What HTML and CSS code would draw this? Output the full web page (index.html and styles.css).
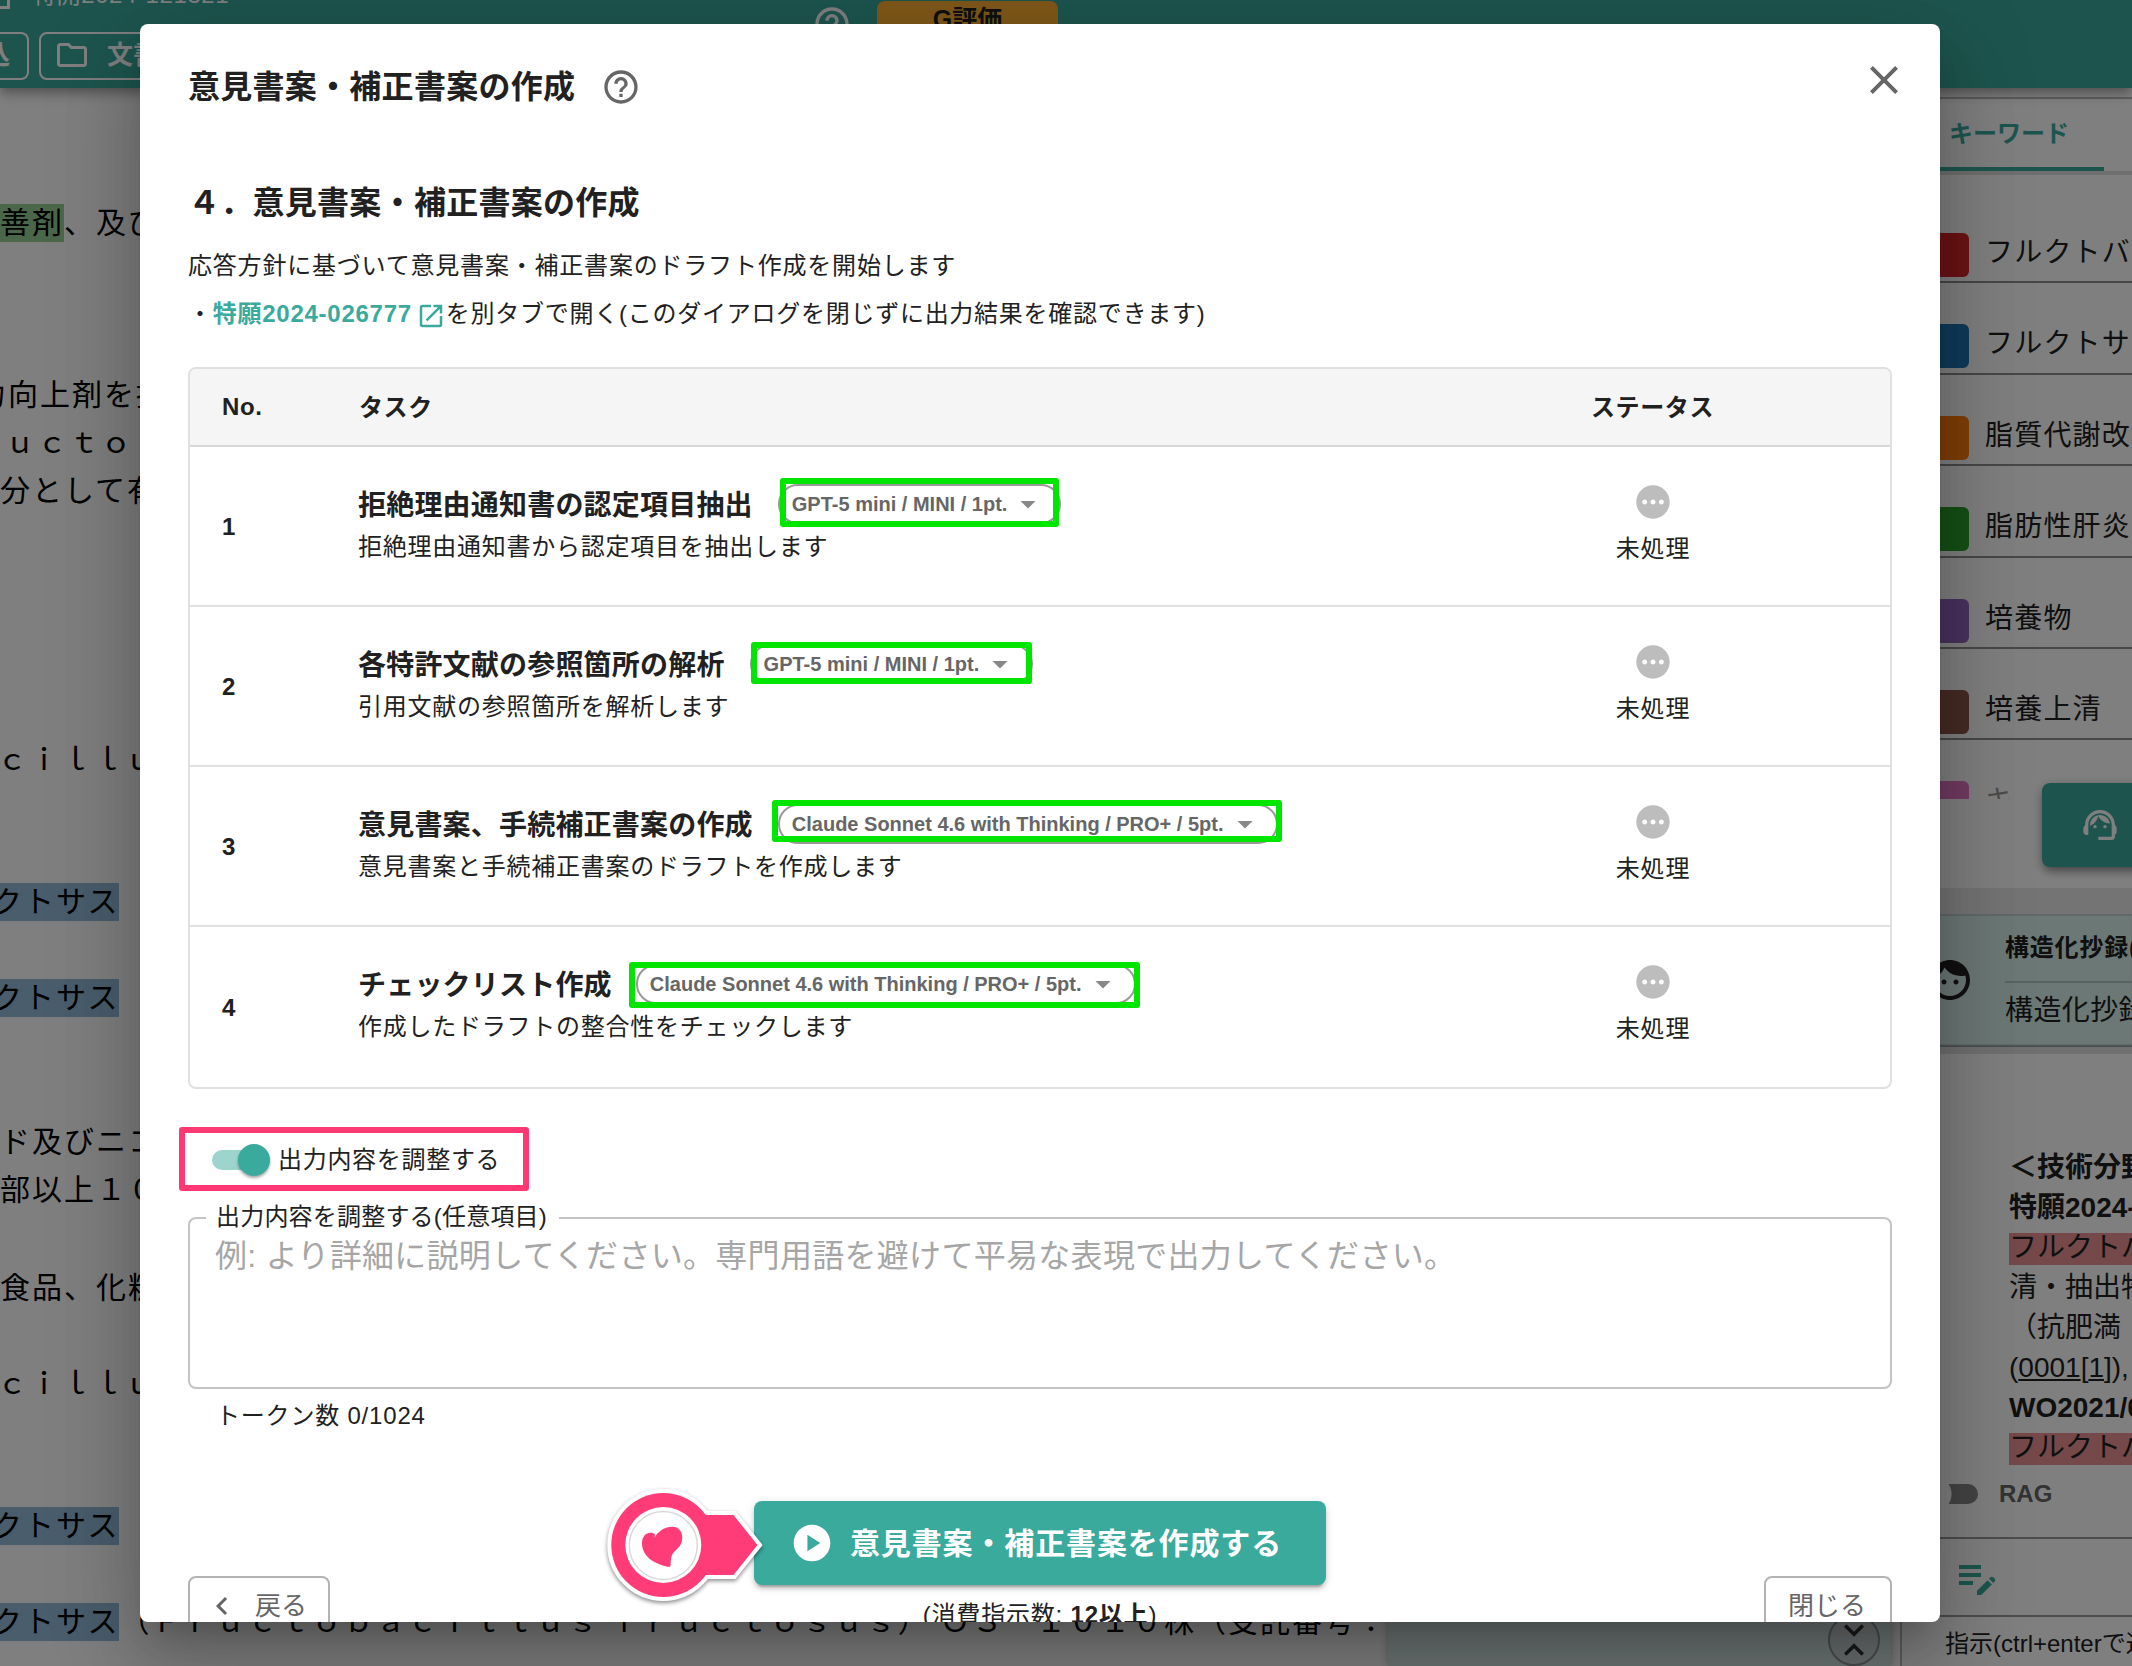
FILE: index.html
```html
<!DOCTYPE html>
<html lang="ja">
<head>
<meta charset="utf-8">
<title>意見書案・補正書案の作成</title>
<link rel="stylesheet" href="styles.css">
</head>
<body>
<div class="app">
  <header class="appbar">
    <div class="appbar-left">
      <div class="appbar-title"><span class="appbar-box"></span>特開2024-121321</div>
      <div class="appbar-buttons">
        <span class="outline-btn first">込</span>
        <span class="outline-btn folder">
          <svg width="36" height="36" viewBox="0 0 24 24"><path d="M9.17 6l2 2H20v10H4V6h5.17M10 4H4c-1.1 0-1.99.9-1.99 2L2 18c0 1.1.9 2 2 2h16c1.1 0 2-.9 2-2V8c0-1.1-.9-2-2-2h-8l-2-2z"/></svg>
          文書
        </span>
      </div>
    </div>
    <svg class="appbar-help" width="40" height="40" viewBox="0 0 24 24"><path d="M11 18h2v-2h-2v2zm1-16C6.48 2 2 6.48 2 12s4.48 10 10 10 10-4.480 10-10S17.520 2 12 2zm0 18c-4.410 0-8-3.590-8-8s3.590-8 8-8 8 3.590 8 8-3.590 8-8 8zm0-14c-2.210 0-4 1.790-4 4h2c0-1.100.900-2 2-2s2 .900 2 2c0 2-3 1.750-3 5h2c0-2.250 3-2.500 3-5 0-2.210-1.790-4-4-4z"/></svg>
    <span class="rating">G評価</span>
  </header>

  <div class="workspace">
    <main class="doc">
      <p class="l1"><mark class="green">善剤</mark>、及び</p>
      <p class="l2">力向上剤を提</p>
      <p class="l3">ｕｃｔｏ</p>
      <p>分として有</p>
      <p class="l5">ｃｉｌｌｕｓ</p>
      <p class="l6"><mark>クトサス</mark></p>
      <p class="l7"><mark>クトサス</mark></p>
      <p class="l8">ド及びニコ</p>
      <p>部以上１０</p>
      <p class="l10">食品、化粧</p>
      <p class="l5b">ｃｉｌｌｕｓ</p>
      <p class="l12"><mark>クトサス</mark></p>
      <p class="l7"><mark>クトサス</mark>（Ｆｒｕｃｔｏｂａｃｉｌｌｕｓ ｆｒｕｃｔｏｓｕｓ） ＯＳ－１０１０株（受託番号：</p>
    </main>
    <section class="tint-panel">
      <span class="expander"><svg width="40" height="40" viewBox="0 0 24 24"><path d="M7.400 2.500 12 7.100l4.600-4.600L18 4l-6 6-6-6zM7.400 21.500 12 16.900l4.600 4.600L18 20l-6-6-6 6z"/></svg></span>
    </section>
    <aside class="side">
      <div class="tabs"><span class="tab">キーワード</span></div>
      <ul class="keywords">
        <li><i class="red"></i>フルクトバチルス</li>
        <li><i class="blue"></i>フルクトサス</li>
        <li><i class="orange"></i>脂質代謝改善剤</li>
        <li><i class="leaf"></i>脂肪性肝炎</li>
        <li><i class="purple"></i>培養物</li>
        <li><i class="brown"></i>培養上清</li>
        <li class="faded"><i class="pink"></i>キ</li>
      </ul>
      <div class="support-row">
        <span class="support-btn"><svg width="40" height="40" viewBox="0 0 24 24"><path d="M21 12.220C21 6.730 16.740 3 12 3c-4.690 0-9 3.650-9 9.280-.600.340-1 .980-1 1.720v2c0 1.100.900 2 2 2h1v-6.100c0-3.870 3.130-7 7-7s7 3.130 7 7V19h-8v2h8c1.100 0 2-.900 2-2v-1.220c.590-.310 1-.920 1-1.640v-2.300c0-.700-.410-1.310-1-1.620z"/><circle cx="9" cy="13" r="1"/><circle cx="15" cy="13" r="1"/><path d="M18 11.030C17.520 8.180 15.040 6 12.050 6c-3.030 0-6.290 2.510-6.030 6.450 2.470-1.010 4.330-3.210 4.860-5.890 1.310 2.630 4 4.440 7.120 4.470z"/></svg></span>
      </div>
      <div class="abstract-card">
        <svg width="48" height="48" viewBox="0 0 24 24"><path d="M9 11.750c-.690 0-1.250.560-1.250 1.250s.560 1.250 1.250 1.250 1.250-.560 1.250-1.250-.560-1.250-1.250-1.250zm6 0c-.690 0-1.250.560-1.250 1.250s.560 1.250 1.250 1.250 1.250-.560 1.250-1.250-.560-1.250-1.250-1.250zM12 2C6.480 2 2 6.480 2 12s4.480 10 10 10 10-4.480 10-10S17.520 2 12 2zm0 18c-4.410 0-8-3.590-8-8 0-.290.020-.580.050-.860 2.360-1.050 4.230-2.980 5.210-5.370C11.070 8.330 14.050 10 17.420 10c.780 0 1.530-.090 2.250-.260.210.710.330 1.470.330 2.260 0 4.410-3.590 8-8 8z"/></svg>
        <div class="abstract-text">
          <b>構造化抄録(</b>
          <span>構造化抄録</span>
        </div>
      </div>
      <div class="answer">
        <div><b>＜技術分野</b></div>
        <div><b>特願2024-</b></div>
        <div><mark class="rose">フルクトバチ</mark></div>
        <div>清・抽出物</div>
        <div>（抗肥満</div>
        <div>(<u>0001</u>[<u>1</u>]),</div>
        <div><b>WO2021/0</b></div>
        <div><mark class="rose">フルクトバチ</mark></div>
      </div>
      <div class="rag"><span class="rag-switch"></span>RAG</div>
      <div class="edit-row"><svg width="48" height="48" viewBox="0 0 24 24"><path d="M3 10h11v2H3v-2zm0-2h11V6H3v2zm0 8h7v-2H3v2zm15.010-3.130.710-.710c.390-.390 1.020-.390 1.410 0l.710.710c.390.390.390 1.020 0 1.410l-.710.710-2.120-2.120zm-.710.710-5.300 5.300V21h2.120l5.300-5.300-2.120-2.120z"/></svg></div>
      <div class="prompt">指示(ctrl+enterで送信)</div>
    </aside>
  </div>
</div>

<div class="backdrop"></div>

<div class="dialog">
  <div class="dialog-head">
    <h1>意見書案・補正書案の作成</h1>
    <svg class="help" width="40" height="40" viewBox="0 0 24 24"><path d="M11 18h2v-2h-2v2zm1-16C6.480 2 2 6.480 2 12s4.480 10 10 10 10-4.480 10-10S17.520 2 12 2zm0 18c-4.410 0-8-3.590-8-8s3.590-8 8-8 8 3.590 8 8-3.590 8-8 8zm0-14c-2.210 0-4 1.790-4 4h2c0-1.100.900-2 2-2s2 .900 2 2c0 2-3 1.750-3 5h2c0-2.250 3-2.500 3-5 0-2.210-1.790-4-4-4z"/></svg>
    <svg class="close" width="48" height="48" viewBox="0 0 24 24"><path d="M19 6.410 17.590 5 12 10.590 6.410 5 5 6.410 10.590 12 5 17.590 6.410 19 12 13.410 17.590 19 19 17.590 13.410 12z"/></svg>
  </div>
  <h2>４．意見書案・補正書案の作成</h2>
  <p class="desc">応答方針に基づいて意見書案・補正書案のドラフト作成を開始します</p>
  <p class="desc link-line">・<a>特願2024-026777</a><svg width="30" height="30" viewBox="0 0 24 24"><path d="M19 19H5V5h7V3H5c-1.110 0-2 .900-2 2v14c0 1.100.890 2 2 2h14c1.100 0 2-.900 2-2v-7h-2v7zM14 3v2h3.590l-9.830 9.830 1.410 1.410L19 6.410V10h2V3h-7z"/></svg>を別タブで開く(このダイアログを閉じずに出力結果を確認できます)</p>

  <div class="table">
    <div class="row thead"><span>No.</span><span class="th-task">タスク</span><span class="th-status">ステータス</span></div>
    <div class="row">
      <b>1</b>
      <div class="task"><div class="task-title"><span>拒絶理由通知書の認定項目抽出</span><span class="chip c1">GPT-5 mini / MINI / 1pt.<svg width="36" height="36" viewBox="0 0 24 24"><path d="M7 10l5 5 5-5z"/></svg><em></em></span></div><div class="task-sub">拒絶理由通知書から認定項目を抽出します</div></div>
      <div class="status"><svg width="40" height="40" viewBox="0 0 24 24"><path d="M12 2C6.480 2 2 6.480 2 12s4.480 10 10 10 10-4.480 10-10S17.520 2 12 2zM7 13.500c-.830 0-1.500-.670-1.500-1.500s.670-1.500 1.500-1.500 1.500.670 1.500 1.500-.670 1.500-1.500 1.500zm5 0c-.830 0-1.500-.670-1.500-1.500s.670-1.500 1.500-1.500 1.500.670 1.500 1.500-.670 1.500-1.500 1.500zm5 0c-.830 0-1.500-.670-1.500-1.500s.670-1.500 1.500-1.500 1.500.670 1.500 1.500-.670 1.500-1.500 1.500z"/></svg>未処理</div>
    </div>
    <div class="row">
      <b>2</b>
      <div class="task"><div class="task-title"><span>各特許文献の参照箇所の解析</span><span class="chip c2">GPT-5 mini / MINI / 1pt.<svg width="36" height="36" viewBox="0 0 24 24"><path d="M7 10l5 5 5-5z"/></svg><em></em></span></div><div class="task-sub">引用文献の参照箇所を解析します</div></div>
      <div class="status"><svg width="40" height="40" viewBox="0 0 24 24"><path d="M12 2C6.480 2 2 6.480 2 12s4.480 10 10 10 10-4.480 10-10S17.520 2 12 2zM7 13.500c-.830 0-1.500-.670-1.500-1.500s.670-1.500 1.500-1.500 1.500.670 1.500 1.500-.670 1.500-1.500 1.500zm5 0c-.830 0-1.500-.670-1.500-1.500s.670-1.500 1.500-1.500 1.500.670 1.500 1.500-.670 1.500-1.500 1.500zm5 0c-.830 0-1.500-.670-1.500-1.500s.670-1.500 1.500-1.500 1.500.670 1.500 1.500-.670 1.500-1.500 1.500z"/></svg>未処理</div>
    </div>
    <div class="row">
      <b>3</b>
      <div class="task"><div class="task-title"><span>意見書案、手続補正書案の作成</span><span class="chip c3">Claude Sonnet 4.6 with Thinking / PRO+ / 5pt.<svg width="36" height="36" viewBox="0 0 24 24"><path d="M7 10l5 5 5-5z"/></svg><em></em></span></div><div class="task-sub">意見書案と手続補正書案のドラフトを作成します</div></div>
      <div class="status"><svg width="40" height="40" viewBox="0 0 24 24"><path d="M12 2C6.480 2 2 6.480 2 12s4.480 10 10 10 10-4.480 10-10S17.520 2 12 2zM7 13.500c-.830 0-1.500-.670-1.500-1.500s.670-1.500 1.500-1.500 1.500.670 1.500 1.500-.670 1.500-1.500 1.500zm5 0c-.830 0-1.500-.670-1.500-1.500s.670-1.500 1.500-1.500 1.500.670 1.500 1.500-.670 1.500-1.500 1.500zm5 0c-.830 0-1.500-.670-1.500-1.500s.670-1.500 1.500-1.500 1.500.670 1.500 1.500-.670 1.500-1.500 1.500z"/></svg>未処理</div>
    </div>
    <div class="row">
      <b>4</b>
      <div class="task"><div class="task-title"><span>チェックリスト作成</span><span class="chip c4">Claude Sonnet 4.6 with Thinking / PRO+ / 5pt.<svg width="36" height="36" viewBox="0 0 24 24"><path d="M7 10l5 5 5-5z"/></svg><em></em></span></div><div class="task-sub">作成したドラフトの整合性をチェックします</div></div>
      <div class="status"><svg width="40" height="40" viewBox="0 0 24 24"><path d="M12 2C6.480 2 2 6.480 2 12s4.480 10 10 10 10-4.480 10-10S17.520 2 12 2zM7 13.500c-.830 0-1.500-.670-1.500-1.500s.670-1.500 1.500-1.500 1.500.670 1.500 1.500-.670 1.500-1.500 1.500zm5 0c-.830 0-1.500-.670-1.500-1.500s.670-1.500 1.500-1.500 1.500.670 1.500 1.500-.670 1.500-1.500 1.500zm5 0c-.830 0-1.500-.670-1.500-1.500s.670-1.500 1.500-1.500 1.500.670 1.500 1.500-.670 1.500-1.500 1.500z"/></svg>未処理</div>
    </div>
  </div>

  <div class="toggle-row"><span class="switch"><i></i></span><span class="toggle-label">出力内容を調整する</span><em class="mark-pink"></em></div>

  <fieldset>
    <legend>出力内容を調整する(任意項目)</legend>
    <div class="placeholder">例: より詳細に説明してください。専門用語を避けて平易な表現で出力してください。</div>
  </fieldset>
  <div class="tokens">トークン数 0/1024</div>

  <div class="actions">
    <span class="btn back"><svg width="36" height="36" viewBox="0 0 24 24"><path d="M15.410 7.410 14 6l-6 6 6 6 1.410-1.410L10.830 12z"/></svg><span>戻る</span></span>
    <div class="create-col">
      <span class="create"><svg width="44" height="44" viewBox="0 0 24 24"><path d="M12 2C6.480 2 2 6.480 2 12s4.480 10 10 10 10-4.480 10-10S17.520 2 12 2zM9.500 16.500v-9l7 4.500-7 4.500z"/></svg><span>意見書案・補正書案を作成する</span></span>
      <div class="cost">(消費指示数: <b>12以上</b>)</div>
      <svg class="badge" width="180" height="142" viewBox="0 0 180 142">
        <g class="badge-outline"><circle cx="63.300" cy="65" r="52"/><path d="M90 35H133.500L157.500 65 133.500 95H90z"/></g>
        <g class="badge-fill"><circle cx="63.300" cy="65" r="52"/><path d="M90 35H133.500L157.500 65 133.500 95H90z"/></g>
        <circle class="badge-inner" cx="63.300" cy="65" r="38"/>
        <circle class="badge-ring" cx="63.300" cy="65.500" r="34"/>
        <path class="badge-heart" d="M54.300 58C56 53.500 54 52.700 50.500 52.700 45 53 42 57 42 64 42.500 76 53 84 69.500 87 71.500 86 70 83 71.500 76.500 73 70 82.500 68 82.300 57.500 82 50.500 78.500 47 72.500 46.700 64 46.500 57.500 52 54.300 58z"/>
      </svg>
    </div>
    <span class="btn shut"><span>閉じる</span></span>
  </div>
</div>
</body>
</html>
```
FILE: styles.css
```css
* { box-sizing: border-box; }

body {
  margin: 0;
  width: 2132px;
  height: 1666px;
  overflow: hidden;
  position: relative;
  background: #fff;
  color: #212121;
  font-family: "Liberation Sans", "Noto Sans CJK JP", sans-serif;
  font-size: 24px;
}

h1, h2, p, ul { margin: 0; padding: 0; }
li { list-style: none; }
svg { display: block; flex: none; fill: currentColor; }

/* ---------- page behind the dialog ---------- */
.app {
  display: flex;
  flex-direction: column;
  height: 1666px;
  overflow: hidden;
}

.appbar {
  display: flex;
  align-items: flex-start;
  height: 88px;
  flex: none;
  background: #3aaa9d;
  color: #fff;
  box-shadow: 0 4px 8px -2px rgba(0, 0, 0, .2), 0 8px 10px rgba(0, 0, 0, .14), 0 2px 20px rgba(0, 0, 0, .12);
  overflow: visible;
  z-index: 1;
}
.appbar-left { width: 812px; }
.appbar-title {
  display: flex;
  gap: 22px;
  margin-top: -19px;
  height: 28px;
  line-height: 28px;
  letter-spacing: .6px;
}
.appbar-box { width: 10px; border: solid #fff; border-width: 0 3px 3px 0; }
.appbar-buttons { display: flex; gap: 10px; margin-top: 23px; }
.outline-btn {
  display: flex;
  align-items: center;
  height: 48px;
  border: 2px solid #fff;
  border-radius: 8px;
  font-weight: bold;
  font-size: 26px;
  line-height: 42px;
  padding-bottom: 2px;
}
.outline-btn.first { width: 29px; justify-content: flex-end; padding-right: 17px; border-left: 0; border-radius: 0 8px 8px 0; }
.outline-btn.folder { width: 160px; padding-left: 13px; gap: 17px; }
.appbar-help { margin-top: 4px; }
.rating {
  width: 181px;
  height: 44px;
  margin: 1px 0 0 25px;
  border-radius: 8px;
  background: #ffb033;
  color: #212121;
  font-weight: bold;
  font-size: 25px;
  line-height: 36px;
  text-align: center;
}

.workspace { display: flex; flex: 1; min-height: 0; }

.doc {
  width: 1388px;
  padding-top: 111px;
  color: #000;
  font-size: 30px;
  letter-spacing: 2px;
  line-height: 48px;
  white-space: nowrap;
  overflow: hidden;
}
mark { color: inherit; background: #93bbd9; }
.doc mark { display: inline-block; height: 38px; line-height: 38px; }
mark.green { background: #95cf95; }
.l2 { margin-top: 124px; text-indent: -24px; }
.l3 { text-indent: 5px; }
.l5 { margin-top: 221px; text-indent: -3px; }
.l5b { margin-top: 48px; text-indent: -3px; }
.l6 { margin-top: 94px; margin-left: -8px; }
.l7 { margin-top: 48px; margin-left: -8px; }
.l8 { margin-top: 96px; }
.l10 { margin-top: 50px; }
.l12 { margin-top: 94px; margin-left: -8px; }

.tint-panel {
  display: flex;
  justify-content: flex-end;
  align-items: flex-end;
  width: 503px;
  padding: 0 11px 0 0;
  background: #d8ebe8;
  box-shadow: 0 0 8px rgba(0, 0, 0, .3);
}
.expander {
  display: flex;
  align-items: center;
  justify-content: center;
  width: 52px;
  height: 52px;
  border: 2px solid #999;
  border-radius: 50%;
  color: #333;
  background: #d5dddc;
}

.side {
  display: flex;
  flex-direction: column;
  width: 232px;
  margin-left: 9px;
  padding-top: 9px;
  border-left: 2px solid #bbb;
  white-space: nowrap;
  overflow: hidden;
}
.side > div { flex: none; }
.tabs { display: flex; height: 78px; border-top: 2px solid #bdbdbd; border-bottom: 4px solid #dedede; }
.tab {
  width: 202px;
  padding-left: 47px;
  border-bottom: 4px solid #3aaa9d;
  color: #3aaa9d;
  font-weight: bold;
  line-height: 70px;
}
.keywords { height: 624px; padding-top: 17px; overflow: hidden; flex: none; }
.keywords li {
  display: flex;
  align-items: flex-start;
  gap: 16px;
  height: 91.400px;
  padding: 39px 0 0 23px;
  border-bottom: 2px solid #8f8f8f;
  font-size: 28px;
  letter-spacing: 1.200px;
  line-height: 44px;
}
.keywords i { flex: none; width: 44px; height: 44px; margin-top: 2px; border-radius: 6px; }
.keywords .faded { color: #999; border: 0; }
.red { background: #d62728; }
.blue { background: #1f77b4; }
.orange { background: #ff7f0e; }
.leaf { background: #2ca02c; }
.purple { background: #9467bd; }
.brown { background: #8c564b; }
.pink { background: #e377c2; }

.support-row { height: 89px; }
.support-btn {
  display: flex;
  align-items: center;
  justify-content: center;
  width: 116px;
  height: 84px;
  margin: -16px 0 0 140px;
  border-radius: 8px;
  background: #3aaa9d;
  color: #fff;
  box-shadow: 0 6px 10px -2px rgba(0, 0, 0, .35), 0 2px 12px rgba(0, 0, 0, .2);
}
.abstract-card {
  display: flex;
  gap: 31px;
  align-items: center;
  height: 166px;
  padding: 0 0 2px 24px;
  border-top: 26px solid #e8e8e8;
  border-bottom: 7px solid #e0e0e0;
  background: #d8f0ec;
  box-shadow: inset 0 -3px 2px -1px #8d9a98, inset 0 2px 0 #c4d2d0;
}
.abstract-text { display: flex; flex-direction: column; }
.abstract-text b { padding-bottom: 13px; border-bottom: 2px solid #b3c6c3; line-height: 40px; letter-spacing: .8px; }
.abstract-text span { padding-top: 7px; font-size: 28px; letter-spacing: .4px; line-height: 42px; }
.answer { height: 417px; padding: 93.500px 0 0 107px; font-size: 28px; line-height: 40px; }
.answer div { height: 40px; }
.answer mark { display: inline-block; height: 32px; line-height: 30px; }
mark.rose { background: #ea9394; }
.rag {
  display: flex;
  align-items: center;
  gap: 21px;
  height: 68px;
  padding: 0 0 21px 18px;
  border-bottom: 2px solid #9b9b9b;
  color: #666;
  font-weight: bold;
}
.rag-switch { width: 58px; height: 20px; border-radius: 10px; background: radial-gradient(circle at 13px 10px, #fff 18px, #888 19px); }
.edit-row { height: 78px; padding: 14px 0 0 51px; border-bottom: 2px solid #9b9b9b; color: #3aaa9d; }
.prompt { padding-left: 43px; line-height: 54px; }

.backdrop { position: absolute; inset: 0; background: rgba(0, 0, 0, .5); z-index: 2; }

/* ---------- dialog ---------- */
.dialog {
  position: absolute;
  z-index: 3;
  left: 140px;
  top: 24px;
  width: 1800px;
  height: 1598px;
  padding: 0 48px;
  border-radius: 8px;
  background: #fff;
  overflow: hidden;
  box-shadow: 0 22px 30px -14px rgba(0, 0, 0, .2), 0 48px 76px 6px rgba(0, 0, 0, .14), 0 18px 92px 16px rgba(0, 0, 0, .12);
}
.dialog-head { display: flex; align-items: center; height: 126px; }
.dialog h1, .dialog h2 { font-size: 32px; font-weight: bold; line-height: 48px; letter-spacing: .270px; }
.help { margin: -1px 0 0 26px; color: #666; }
.close { margin: -14px -16px 0 auto; color: #666; }
.dialog h2 { margin-top: 29px; }
.desc { font-size: 24px; line-height: 48px; letter-spacing: .8px; }
.dialog h2 + .desc { margin-top: 15px; }
.link-line { display: flex; align-items: center; letter-spacing: .740px; }
.link-line a { color: #3aaa9d; font-weight: bold; }
.link-line svg { color: #3aaa9d; margin: 4px 0 0 4px; }

.table { margin-top: 29px; border: 2px solid #e0e0e0; border-radius: 8px; overflow: hidden; }
.row {
  display: grid;
  grid-template-columns: 137px 1fr 475px;
  align-items: center;
  height: 160px;
  padding-left: 32px;
  border-bottom: 2px solid #e0e0e0;
}
.row:last-child { border-bottom: 0; }
.row > b { padding-top: 1px; }
.thead { height: 78px; background: #f5f5f5; border-bottom-color: #d8d8d8; font-weight: bold; letter-spacing: .6px; }
.th-task, .th-status { padding-bottom: 3px; }
.th-status { text-align: center; }
.task { align-self: start; padding-top: 36px; margin-left: -1px; }
.task-title { display: flex; align-items: center; height: 42px; font-size: 28px; font-weight: bold; letter-spacing: .2px; white-space: nowrap; }
.task-title > span:first-child { padding-bottom: 3px; }
.task-sub { padding-top: 1px; line-height: 41px; letter-spacing: .75px; }
.status { display: flex; flex-direction: column; align-items: center; align-self: start; padding: 35px 0 0 1px; line-height: 53px; letter-spacing: .8px; }
.status svg { color: #bdbdbd; }

.chip {
  position: relative;
  display: flex;
  align-items: center;
  height: 40px;
  margin-left: 25px;
  padding: 0 13px 0 12px;
  border: 2px solid #999;
  border-radius: 20px;
  color: #666;
  font-size: 20px;
  letter-spacing: 0;
}
.chip svg { margin-left: 3px; color: #888; }
/* highlight frames drawn over the chips */
.chip em { position: absolute; border: 6px solid #00e600; border-radius: 3px; }
.c1 em { inset: -8px 0 -5px 0; }
.c2 em { inset: -4px -1px -2px -1px; }
.c3 em { inset: -6px -6px 0 -8px; }
.c4 em { inset: -4px -6px -6px -9px; }
.c4 { margin-left: 24px; }

.toggle-row { position: relative; display: flex; align-items: center; height: 48px; margin-top: 47px; padding-left: 24px; letter-spacing: .7px; }
.toggle-label { padding-bottom: 5px; }
.switch { display: flex; align-items: center; justify-content: flex-end; width: 53px; height: 20px; margin-right: 13px; border-radius: 10px; background: #9dd4ce; }
.switch i { flex: none; width: 32px; height: 32px; margin-right: -5px; border-radius: 50%; background: #3aaa9d; box-shadow: 0 2px 3px rgba(0, 0, 0, .35); }
.mark-pink { position: absolute; left: -9px; top: -9px; width: 350px; height: 64px; border: 6px solid #ff3873; border-radius: 3px; }

fieldset { height: 185px; margin: 20px 0 0; padding: 0 16px; border: 2px solid #c4c4c4; border-radius: 8px; min-width: 0; }
legend { padding: 0 12px 0 10px; line-height: 26px; height: 28px; letter-spacing: .2px; }
.placeholder { margin-left: 9px; color: #a6a6a6; font-size: 32px; line-height: 48px; letter-spacing: .3px; white-space: nowrap; }
.tokens { margin-top: 7px; padding-left: 28px; line-height: 40px; letter-spacing: .8px; }

.actions { display: grid; grid-template-columns: 1fr auto 1fr; align-items: start; margin-top: 65px; }
.btn {
  display: flex;
  align-items: center;
  height: 60px;
  margin-top: 75px;
  border: 2px solid #b3b3b3;
  border-radius: 8px;
  color: #666;
  font-size: 26px;
}
.btn span { padding-bottom: 5px; }
.back { width: 142px; padding-left: 14px; gap: 15px; }
.shut { width: 128px; justify-content: center; justify-self: end; padding-right: 2px; }
.create-col { position: relative; width: 572px; }
.create {
  display: flex;
  align-items: center;
  gap: 16px;
  height: 84px;
  padding-left: 36px;
  border-radius: 8px;
  background: #3aaa9d;
  color: #fff;
  font-size: 30px;
  font-weight: bold;
  letter-spacing: .860px;
  box-shadow: 0 6px 2px -4px rgba(0, 0, 0, .2), 0 4px 4px rgba(0, 0, 0, .14), 0 2px 10px rgba(0, 0, 0, .12);
}
.create span { padding-bottom: 5px; }
.cost { margin-top: 10px; text-align: center; line-height: 40px; letter-spacing: .8px; }

/* heart badge pointing at the create button */
.badge { position: absolute; left: -154px; top: -21px; }
.badge-outline { fill: #fff; stroke: #fff; stroke-width: 8; filter: drop-shadow(0 2px 2px rgba(0, 0, 0, .45)); }
.badge-fill, .badge-heart { fill: #ff3b78; }
.badge-inner { fill: #fff; }
.badge-ring { fill: none; stroke: #d9d9d9; stroke-width: 1.500; }
```
